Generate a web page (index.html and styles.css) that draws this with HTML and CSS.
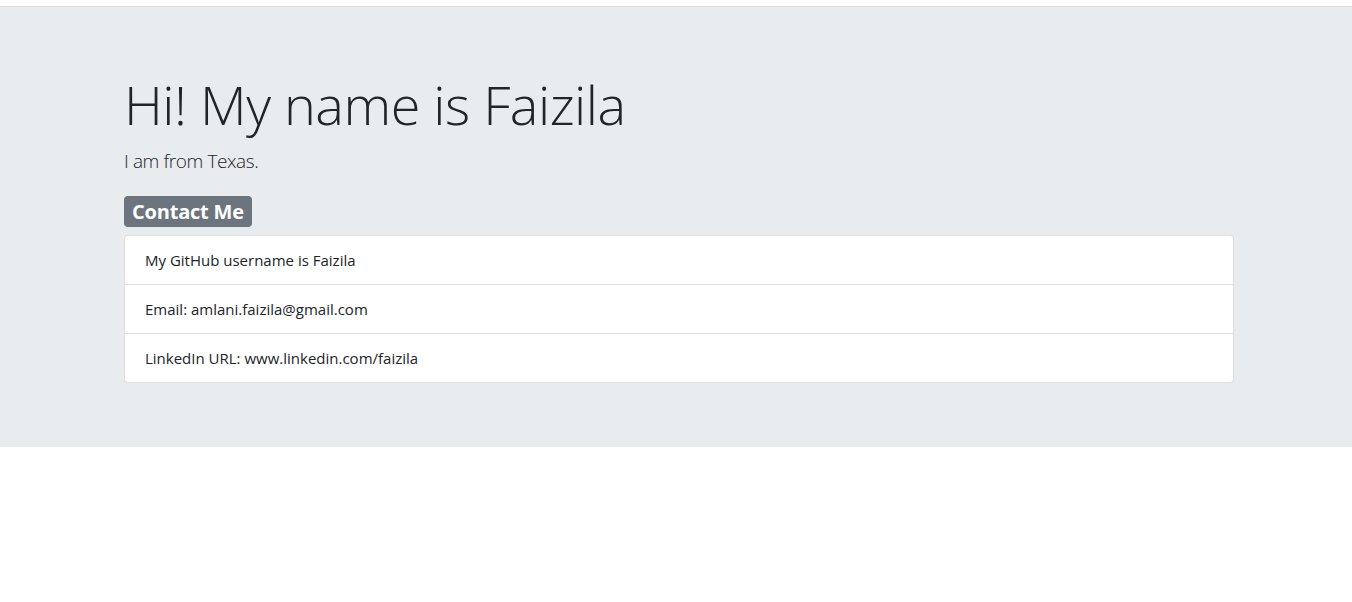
FILE: index.html
```html
<!DOCTYPE html>
<html lang="en">
<head>
<meta charset="utf-8">
<title>Faizila</title>
<link rel="stylesheet" href="styles.css">
</head>
<body>
<div class="topbar"></div>
<section class="jumbotron">
  <div class="container">
    <h1 class="display">Hi! My name is Faizila</h1>
    <p class="lead">I am from Texas.</p>
    <h3 class="badge-wrap"><span class="badge">Contact Me</span></h3>
    <ul class="list-group">
      <li class="list-item">My GitHub username is Faizila</li>
      <li class="list-item">Email: amlani.faizila@gmail.com</li>
      <li class="list-item">LinkedIn URL: www.linkedin.com/faizila</li>
    </ul>
  </div>
</section>
</body>
</html>
```

FILE: styles.css
```css
* { box-sizing: border-box; }
html, body { margin: 0; padding: 0; }
body {
  font-family: "Open Sans", "Noto Sans", sans-serif;
  color: #212529;
  background: #fff;
  font-size: 16px;
  line-height: 1.5;
}
.topbar {
  height: 7px;
  border-bottom: 1px solid #dcdfe2;
  background: #fff;
}
.jumbotron {
  background: #e9ecef;
  padding: 64px 0;
}
.container {
  width: 1110px;
  margin-left: 124px;
}
.display {
  margin: 0 0 8px;
  font-size: 54px;
  font-weight: 300;
  line-height: 67px;
  letter-spacing: -0.5px;
}
.lead {
  margin: 0 0 16px;
  font-size: 19px;
  font-weight: 300;
  line-height: 30px;
  letter-spacing: -0.4px;
}
.badge-wrap {
  margin: 0 0 8px;
  font-size: 28px;
  line-height: 1.2;
  font-weight: 500;
}
.badge {
  display: inline-block;
  background: #6c757d;
  color: #fff;
  font-size: 20px;
  font-weight: 700;
  line-height: 1;
  padding: 6px 8px 5px;
  border-radius: 4px;
  vertical-align: baseline;
  letter-spacing: -0.2px;
}
.list-group {
  list-style: none;
  margin: 0;
  padding: 0;
  background: #fff;
  border: 1px solid rgba(0,0,0,.125);
  border-radius: 4px;
}
.list-item {
  padding: 12px 20px;
  font-size: 15px;
  line-height: 24px;
  border-top: 1px solid rgba(0,0,0,.125);
}
.list-item:first-child { border-top: 0; }
```
